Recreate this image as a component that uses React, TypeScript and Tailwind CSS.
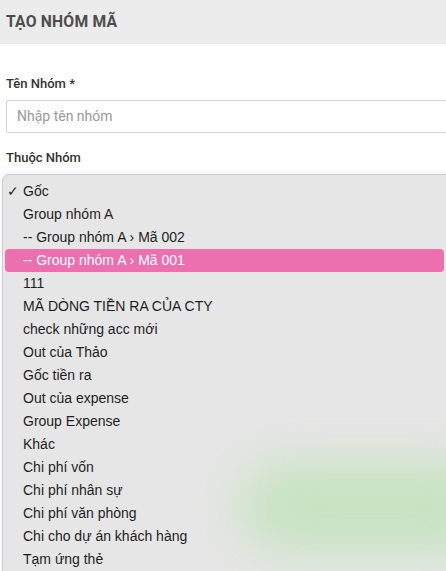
const groups = [
  "Gốc",
  "Group nhóm A",
  "-- Group nhóm A › Mã 002",
  "-- Group nhóm A › Mã 001",
  "111",
  "MÃ DÒNG TIỀN RA CỦA CTY",
  "check những acc mới",
  "Out của Thảo",
  "Gốc tiền ra",
  "Out của expense",
  "Group Expense",
  "Khác",
  "Chi phí vốn",
  "Chi phí nhân sự",
  "Chi phí văn phòng",
  "Chi cho dự án khách hàng",
  "Tạm ứng thẻ",
];

export default function App() {
  const selected = 0;
  const hovered = 3;

  return (
    <div className="relative w-[446px] h-[571px] overflow-hidden bg-white font-['Roboto',sans-serif]">
      <div className="h-[44px] bg-[#ececec] flex items-center px-[6px]">
        <h1 className="text-[15.7px] font-bold text-[#4d4d4d] tracking-[0.2px]">TẠO NHÓM MÃ</h1>
      </div>

      <div className="px-[6px] pt-[32px]">
        <label className="block text-[13px] font-medium text-[#333] leading-[16px]">Tên Nhóm *</label>
        <div className="mt-[8px] h-[33px] w-[460px] border border-[#d4d4d4] rounded-[2px] flex items-center px-[10px]">
          <span className="text-[14px] text-[#9a9a9a]">Nhập tên nhóm</span>
        </div>
        <label className="block mt-[17px] text-[13px] font-medium text-[#333] leading-[16px]">Thuộc Nhóm</label>
      </div>

      <div className="ml-[2px] mt-[8px] w-[460px] bg-[#e6e6e6] border border-[#c9ccd3] rounded-tl-[7px] pt-[5px] font-['Liberation_Sans',Arial,sans-serif] shadow-[0_-2px_6px_rgba(0,0,0,0.05)]">
        {groups.map((g, i) => (
          <div
            key={g}
            className={
              i === hovered
                ? "mx-[2px] w-[439px] h-[23px] flex items-center rounded-[4px] bg-[#ec6fb0] text-white text-[14px]"
                : "mx-[2px] h-[23px] flex items-center text-[14px] text-[#1e1e1e]"
            }
          >
            <span className="w-[18px] pl-[2px] text-[14px]">{i === selected ? "✓" : ""}</span>
            <span>{g}</span>
          </div>
        ))}
      </div>

      <div className="pointer-events-none absolute left-[240px] top-[462px] w-[260px] h-[90px] rounded-full bg-[#bfe3b8] opacity-80 blur-[24px]" />
    </div>
  );
}
